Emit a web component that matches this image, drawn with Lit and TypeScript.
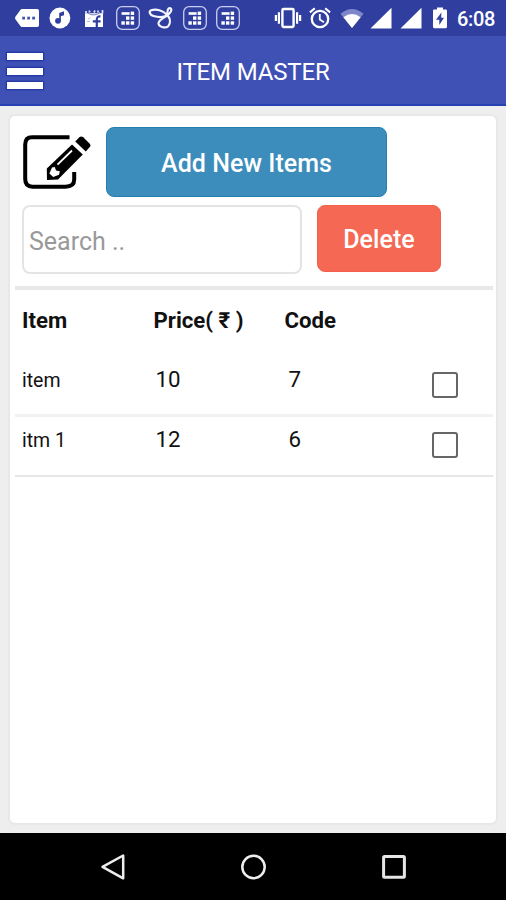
import { LitElement, html, css } from "lit";
import { customElement, property, state } from "lit/decorators.js";

const calculator = html`<svg width="26" height="26" viewBox="0 0 26 26">
  <rect x="1.7" y="1.7" width="22.6" height="22.6" rx="5.5" fill="none" stroke="#c9cdf2" stroke-width="1.3" />
  <g fill="#fff">
    <rect x="6.6" y="7.2" width="8" height="2.6" />
    <rect x="15.7" y="6.6" width="3.4" height="3.4" />
    <rect x="11" y="11.4" width="3.4" height="3.4" /><rect x="15.7" y="11.4" width="3.4" height="3.4" />
    <rect x="6.4" y="16.3" width="3.4" height="3.4" /><rect x="11" y="16.3" width="3.4" height="3.4" /><rect x="15.7" y="16.3" width="3.4" height="3.4" />
  </g>
</svg>`;

const signal = html`<svg width="24" height="26" viewBox="0 0 24 26"><path d="M1.5 23.5L22.5 2.7V23.5Z" fill="#fff" /></svg>`;

@customElement("status-bar")
export class StatusBar extends LitElement {
  static styles = css`
    :host {
      display: flex;
      box-sizing: border-box;
      height: 36px;
      padding-left: 10px;
      background: #303f9f;
      color: #fff;
      font: 500 20px/36px Roboto, sans-serif;
    }
    svg { display: block; flex: none; }
    .cell { display: flex; flex: none; align-items: center; justify-content: center; width: 33.6px; height: 36px; }
    .right { display: flex; margin-left: 26.8px; }
    .w32 { width: 32px; }
    .w26 { width: 26px; }
    .w35 { width: 35px; }
    .w23 { width: 23px; }
    .clock { padding-left: 5px; padding-top: 1px; letter-spacing: -0.3px; }
  `;
  render() {
    return html`
      <div class="cell"><svg width="26" height="26" viewBox="0 0 26 26">
        <path d="M8 4H23.2Q25 4 25 5.8V20.2Q25 22 23.2 22H8Q7 22 6.4 21L1.4 14.2Q.6 13 1.4 11.8L6.4 5Q7 4 8 4Z" fill="#fff" />
        <g fill="#4655ae"><rect x="8.2" y="11.7" width="2.8" height="2.8" /><rect x="13.2" y="11.7" width="2.8" height="2.8" /><rect x="18.2" y="11.7" width="2.8" height="2.8" /></g>
      </svg></div>
      <div class="cell"><svg width="26" height="26" viewBox="0 0 26 26">
        <circle cx="12.9" cy="13" r="10.4" fill="#fff" />
        <circle cx="11" cy="15.8" r="2.9" fill="#303f9f" />
        <path d="M13 16V8.6L16.2 7.4V9.6L13.4 10.6" stroke="#303f9f" stroke-width="1.6" fill="#303f9f" />
      </svg></div>
      <div class="cell"><svg width="26" height="26" viewBox="0 0 26 26">
        <path d="M4 8.2H22V22H4Z" fill="#fff" />
        <path d="M5 8V6M8.5 7.5V5.5M13 7.5L14 5.5M17 7.5V5.5M21.5 8.5V5" stroke="#dfe2fa" stroke-width="1.7" />
        <path d="M6.5 8Q13 12 19 7.5" fill="none" stroke="#8e98d4" stroke-width="1.2" />
        <path d="M19.5 11.5Q15.8 11 15.8 14.5V22.5M11.8 16.3H19.6" fill="none" stroke="#303f9f" stroke-width="2.2" />
        <path d="M6 16.5H9M7 14L9.5 13" stroke="#b4bbe6" stroke-width="1" />
      </svg></div>
      <div class="cell">${calculator}</div>
      <div class="cell"><svg width="28" height="26" viewBox="0 0 28 26">
        <g fill="none" stroke="#f4f5ff" stroke-width="2.2">
          <path d="M20.5 10.2C16 5.2 9 3.5 4.2 5.3C1.7 6.4 2.4 9.8 6.5 11C12 12.6 18.2 12.4 22.2 8.7C25.2 5.9 24.8 2.9 22.5 3.2C20 3.6 20.3 7 20.6 10" />
          <path d="M20.5 10C23.5 14 23.7 18.5 21.2 21.2C18.5 23.6 12.5 22.2 11.6 19C10.9 15.9 15.4 13.4 20 10.8" />
        </g>
      </svg></div>
      <div class="cell">${calculator}</div>
      <div class="cell">${calculator}</div>
      <div class="right">
        <div class="cell w32"><svg width="28" height="26" viewBox="0 0 28 26">
          <rect x="8.4" y="4" width="11.2" height="18" rx="1.2" fill="none" stroke="#fff" stroke-width="2.4" />
          <path d="M4.9 7.2V18.8M23.1 7.2V18.8" stroke="#fff" stroke-width="2.2" />
          <path d="M1.9 10V16M26.1 10V16" stroke="#fff" stroke-width="2.2" />
        </svg></div>
        <div class="cell w32"><svg width="26" height="26" viewBox="0 0 26 26">
          <circle cx="13" cy="14" r="8.2" fill="none" stroke="#fff" stroke-width="2.3" />
          <path d="M12.8 9V14.6L17 17.2" fill="none" stroke="#fff" stroke-width="1.8" />
          <path d="M2.9 7.4L7.8 3.3M23.1 7.4L18.2 3.3" stroke="#fff" stroke-width="2.1" />
        </svg></div>
        <div class="cell w32"><svg width="26" height="26" viewBox="0 0 26 26">
          <path d="M1.5 8.8Q13 -.8 24.5 8.8L13 23Z" fill="#7e88c8" />
          <path d="M4.4 12.3Q13 5.8 21.6 12.3L13 23Z" fill="#fff" />
        </svg></div>
        <div class="cell w26">${signal}</div>
        <div class="cell w35">${signal}</div>
        <div class="cell w23"><svg width="16" height="26" viewBox="0 0 16 26">
          <path d="M5 2.6H11V4.5H13.8Q15 4.5 15 5.8V21.8Q15 23.2 13.8 23.2H2.2Q1 23.2 1 21.8V5.8Q1 4.5 2.2 4.5H5Z" fill="#fff" />
          <path d="M9.4 7.5L4 14.8H7.3V20L12 12.7H9.2Z" fill="#303f9f" />
        </svg></div>
        <span class="clock">6:08</span>
      </div>`;
  }
}

@customElement("item-row")
export class ItemRow extends LitElement {
  @property() name = "";
  @property() price = "";
  @property() code = "";
  static styles = css`
    :host {
      display: grid;
      grid-template-columns: 133.5px 133px 143.5px 1fr;
      align-items: start;
      box-sizing: border-box;
      padding-left: 7px;
      color: #111;
      font: 400 22.3px/26px Roboto, sans-serif;
    }
    .name { font-size: 19.5px; padding-top: 2px; }
    .box { box-sizing: border-box; width: 26px; height: 26px; margin-top: 6px; border: 2.5px solid #666; border-radius: 3px; background: #fff; }
  `;
  render() {
    return html`<span class="name">${this.name}</span><span>${this.price}</span><span>${this.code}</span><span class="box"></span>`;
  }
}

@customElement("app-root")
export class AppRoot extends LitElement {
  @state() private items = [
    { name: "item", price: "10", code: "7" },
    { name: "itm 1", price: "12", code: "6" },
  ];

  static styles = css`
    :host {
      display: flex;
      flex-direction: column;
      height: 900px;
      background: #eee;
      font-family: Roboto, sans-serif;
    }
    .bar {
      display: grid;
      grid-template-columns: 1fr auto 1fr;
      align-items: center;
      box-sizing: border-box;
      flex: none;
      height: 70px;
      background: #3f51b5;
      border-bottom: 2px solid #2541b4;
      color: #fff;
    }
    .menu { display: flex; flex-direction: column; gap: 7.4px; width: 36px; margin-left: 7px; padding-top: 2px; }
    .menu i { display: block; height: 7px; background: #fff; box-shadow: 0 0 1.5px 0.7px #1d319f; }
    .title { font-size: 24px; line-height: 28px; letter-spacing: -0.15px; padding-top: 3px; }
    .card {
      box-sizing: border-box;
      flex: 1;
      margin: 8px 8px 8px;
      padding: 11px 3px 0 5px;
      background: #fff;
      border: 2px solid #e8e8e8;
      border-radius: 7px;
      display: flex;
      flex-direction: column;
    }
    .top, .tools { display: flex; flex: none; padding-left: 7px; }
    .edit { display: block; width: 72px; height: 60px; margin-top: 5px; }
    .button {
      box-sizing: border-box;
      display: flex;
      align-items: center;
      justify-content: center;
      border-radius: 8px;
      color: #fff;
      font-size: 25px;
      font-weight: 500;
      letter-spacing: 0.05px;
      white-space: nowrap;
    }
    .add { width: 281px; height: 70px; margin-left: 12px; background: #3c8dbc; border: 1.5px solid #2380ae; padding-top: 3px; }
    .tools { padding-top: 8px; }
    .search {
      box-sizing: border-box;
      width: 280px;
      height: 69px;
      padding: 3px 0 0 5px;
      border: 2px solid #e4e4e4;
      border-radius: 8px;
      color: #999;
      font-size: 25px;
      line-height: 64px;
    }
    .delete { width: 124px; height: 67px; margin-left: 15px; background: #f56954; border: 1px solid #f4604a; padding-top: 1px; }
    .rule { flex: none; height: 4px; margin-top: 12px; background: #e8e8e8; }
    .head {
      display: grid;
      grid-template-columns: 131.5px 131px 1fr;
      flex: none;
      height: 61px;
      padding: 17px 0 0 7px;
      box-sizing: border-box;
      color: #111;
      font: 700 22.2px/26px Roboto, sans-serif;
      white-space: nowrap;
    }
    item-row { flex: none; height: 61px; padding-top: 15px; border-bottom: 2px solid #e6e6e6; }
    item-row:first-of-type { height: 66px; border-bottom: 3px solid #f2f2f2; }
    item-row + item-row { height: 60px; padding-top: 9px; }
    .nav {
      display: flex;
      flex: none;
      align-items: center;
      justify-content: space-between;
      box-sizing: border-box;
      height: 67px;
      padding: 0 98px;
      background: #000;
    }
    .nav svg { display: block; }
  `;

  render() {
    return html`
      <status-bar></status-bar>
      <div class="bar">
        <div class="menu"><i></i><i></i><i></i></div>
        <div class="title">ITEM MASTER</div>
      </div>
      <div class="card">
        <div class="top">
          <svg class="edit" viewBox="0 0 72 60">
            <path d="M47.5 5.3H10Q3.2 5.3 3.2 12.5V47Q3.2 54.7 10.5 54.7H43.5Q52.2 54.7 52.2 47.5V40" fill="none" stroke="#000" stroke-width="4" stroke-linejoin="round" />
            <path d="M50 12.5L60.8 22.5L36 47.5L25 48L24.8 36.6Z" fill="#000" />
            <path d="M30 35.5L32.8 35.1L34 38.5L37.8 39.3L37 42.8L31.2 45L27.4 41.5Z" fill="#fff" />
            <path d="M35.5 32.7L50 18.5" stroke="#fff" stroke-width="1.8" />
            <path d="M57.6 4.9Q59.4 3.8 61.2 5.2L68 12Q69 13.4 68 14.8L63.8 19.6L53.2 9.6Z" fill="#000" />
          </svg>
          <div class="button add">Add New Items</div>
        </div>
        <div class="tools">
          <div class="search">Search ..</div>
          <div class="button delete">Delete</div>
        </div>
        <div class="rule"></div>
        <div class="head"><span>Item</span><span>Price( ₹ )</span><span>Code</span></div>
        ${this.items.map((i) => html`<item-row .name=${i.name} .price=${i.price} .code=${i.code}></item-row>`)}
      </div>
      <div class="nav">
        <svg width="30" height="30" viewBox="0 0 30 30"><path d="M25.2 3.5V26.3L4.5 14.8Z" fill="none" stroke="#eee" stroke-width="2.5" stroke-linejoin="round" /></svg>
        <svg width="30" height="30" viewBox="0 0 30 30"><circle cx="15.5" cy="15" r="11.2" fill="none" stroke="#eee" stroke-width="2.5" /></svg>
        <svg width="30" height="30" viewBox="0 0 30 30"><rect x="5.6" y="4.6" width="20.8" height="20.6" rx="1" fill="none" stroke="#e6e6e6" stroke-width="3" /></svg>
      </div>`;
  }
}
